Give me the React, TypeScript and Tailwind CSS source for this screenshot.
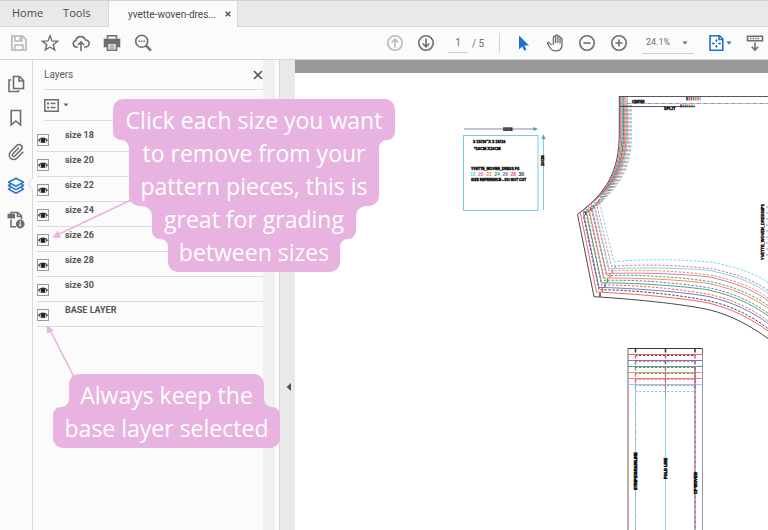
import React, { useState } from "react";

const sizes = [
  { name: "30", color: "#333333" },
  { name: "28", color: "#f0525c" },
  { name: "26", color: "#6a68b4" },
  { name: "24", color: "#2fa35f" },
  { name: "22", color: "#f28150" },
  { name: "20", color: "#da6c9f" },
  { name: "18", color: "#74cfe3" },
];

const layers = [
  "size 18",
  "size 20",
  "size 22",
  "size 24",
  "size 26",
  "size 28",
  "size 30",
  "BASE LAYER",
];

const Icon = ({ children }: { children: React.ReactNode }) => (
  <svg
    width="18"
    height="18"
    viewBox="0 0 18 18"
    fill="none"
    stroke="currentColor"
    strokeWidth="1.6"
    className="shrink-0"
    aria-hidden="true"
  >
    {children}
  </svg>
);

const IconButton = ({
  label,
  children,
  className = "text-[#6e6e6e]",
}: {
  label: string;
  children: React.ReactNode;
  className?: string;
}) => (
  <button aria-label={label} className={"flex shrink-0 items-center " + className}>
    {children}
  </button>
);

const Caret = ({ className = "" }: { className?: string }) => (
  <svg width="6" height="4" viewBox="0 0 6 4" className={className} aria-hidden="true">
    <path d="M0.4 0.4h5.2L3 3.6z" fill="currentColor" />
  </svg>
);

const TabBar = () => (
  <div className="flex h-[27px] border-t border-[#d2d2d2] bg-[#e9e9e9] text-[11px] text-[#4a4a4a]">
    <nav className="flex w-[109px] items-center gap-5 border-r border-b border-[#d8d8d8] pl-3 font-['Open_Sans',sans-serif]">
      <a href="#home">Home</a>
      <a href="#tools">Tools</a>
    </nav>
    <div className="flex w-32 items-center justify-between bg-[#fbfbfb] pr-1.5 pl-[19px] text-[10px]">
      <span>yvette-woven-dres...</span>
      <button aria-label="Close tab">
        <svg width="6" height="6" viewBox="0 0 6 6" stroke="#555" strokeWidth="1.5">
          <path d="M0.7 0.7l4.6 4.6M5.3 0.7L0.7 5.3" />
        </svg>
      </button>
    </div>
    <div className="flex-1 border-b border-l border-[#d8d8d8]" />
  </div>
);

const Toolbar = () => (
  <div className="flex h-[33px] items-center justify-between border-b border-[#d5d5d5] bg-[#fbfbfb] pr-1 pl-2.5 text-[10px] text-[#6e6e6e]">
    <div className="flex gap-[13px]">
      <IconButton label="Save" className="text-[#b5b5b5]">
        <Icon>
          <path d="M1.8 2h10.7L16 5.5V16H1.8z" />
          <path d="M5 2v5h7V2M5 16v-5h8v5M10 3v3" strokeWidth="1.4" />
        </Icon>
      </IconButton>
      <IconButton label="Star">
        <Icon>
          <path d="M9 1.8l2 5.1 5.5.3-4.3 3.5 1.5 5.3L9 13l-4.7 3 1.5-5.3-4.3-3.5L7 6.9z" strokeWidth="1.4" />
        </Icon>
      </IconButton>
      <IconButton label="Upload">
        <Icon>
          <path d="M6 13H4.500a3.300 3.300 0 0 1-.7-6.500A5 5 0 0 1 13.400 6a3.500 3.500 0 0 1 .4 7H12M9 17V8.500M6 11l3-3 3 3" />
        </Icon>
      </IconButton>
      <IconButton label="Print">
        <Icon>
          <path d="M4.5 5V1.7h9V5" />
          <path d="M1.500 5.500h15v7h-15z" fill="currentColor" />
          <path d="M4.5 9.5h9v6.8h-9z" fill="#fbfbfb" />
          <path d="M6.500 12h5M6.500 14h5" strokeWidth="1" />
        </Icon>
      </IconButton>
      <IconButton label="Search">
        <Icon>
          <circle cx="7.700" cy="7.300" r="6" />
          <path d="M12 11.6l5 5" strokeWidth="2.2" />
          <path d="M4.400 7.300h6.600" strokeDasharray="1.5 1" />
        </Icon>
      </IconButton>
    </div>

    <div className="flex items-center gap-3.5">
      <div className="flex items-center gap-[13px]">
        <IconButton label="Previous page" className="text-[#b9b9b9]">
          <Icon>
            <circle cx="9" cy="9" r="7.200" />
            <path d="M9 13.5v-8M5.700 8.500L9 5.200l3.300 3.300" />
          </Icon>
        </IconButton>
        <IconButton label="Next page">
          <Icon>
            <circle cx="9" cy="9" r="7.200" />
            <path d="M9 4.500v8M5.700 9.500L9 12.800l3.300-3.300" />
          </Icon>
        </IconButton>
        <label className="flex items-center gap-1">
          <input
            aria-label="Page number"
            defaultValue="1"
            className="h-5 w-5 border-b border-[#d0d0d0] bg-transparent text-center"
          />
          <span className="w-3.5 whitespace-nowrap">/ 5</span>
        </label>
        <div className="h-5 w-px bg-[#d5d5d5]" />
      </div>
      <IconButton label="Select" className="text-[#1f72cc]">
        <Icon>
          <path d="M5 1.500v14l3.200-3 2 4.200 2.200-1-2-4.100H15z" fill="currentColor" stroke="none" />
        </Icon>
      </IconButton>
      <IconButton label="Pan">
        <Icon>
          <path
            strokeWidth="1.300"
            strokeLinejoin="round"
            d="M5.500 11L3 8.600c-1-.8-2 .2-1.400 1.100l3 4.800c1 1.600 2.400 2.400 4.700 2.400 4 0 6.700-2 6.700-6V5c0-1.500-2-1.500-2 0v4V3.200c0-1.500-2.200-1.500-2.200 0V8.500 2.200c0-1.600-2.200-1.600-2.200 0v6.300V3.200c0-1.500-2.200-1.500-2.200 0V11"
          />
        </Icon>
      </IconButton>
      <IconButton label="Zoom out">
        <Icon>
          <circle cx="9" cy="9" r="7.200" />
          <path d="M5.500 9h7" />
        </Icon>
      </IconButton>
      <IconButton label="Zoom in">
        <Icon>
          <circle cx="9" cy="9" r="7.200" />
          <path d="M5.500 9h7M9 5.500v7" />
        </Icon>
      </IconButton>
      <div className="grid items-center border-b border-[#d0d0d0]">
        <select
          aria-label="Zoom level"
          className="col-start-1 row-start-1 h-5 w-[52px] appearance-none bg-transparent pl-1 text-[9px]"
        >
          <option>24.1%</option>
          <option>50%</option>
          <option>100%</option>
        </select>
        <Caret className="pointer-events-none col-start-1 row-start-1 mr-1.5 justify-self-end" />
      </div>
      <IconButton label="Fit page" className="w-6 text-[#1f72cc]">
        <Icon>
          <path d="M2 1.700h9.500L14.800 5v11.300H2z" />
          <path d="M11 1.700v3.800h3.800" />
          <path d="M8.400 6v2M8.400 11v2M4.500 9.500h2.300M10 9.500h2.300" strokeWidth="1.2" />
          <path
            d="M7 6.800L8.400 5l1.400 1.800zM7 12.200l1.400 1.800 1.400-1.800zM5.300 8L3.700 9.500 5.300 11zM11.500 8l1.600 1.500-1.600 1.500z"
            fill="currentColor"
            stroke="none"
          />
        </Icon>
        <Caret />
      </IconButton>
      <IconButton label="Scrolling">
        <Icon>
          <path d="M1.500 2.200h15v4.600h-15z" />
          <path d="M4 4.500h10" strokeDasharray="1.500 1" />
          <path d="M9 8.500V16M5.800 12.800L9 16l3.200-3.200" />
        </Icon>
      </IconButton>
    </div>
  </div>
);

const Rail = () => (
  <nav
    aria-label="Panels"
    className="flex w-8 shrink-0 flex-col items-center gap-4 bg-[#fbfbfb] pt-[15px]"
  >
    <IconButton label="Pages">
      <Icon>
        <path d="M6.500 1.500h6l4 4v8h-10z" />
        <path d="M12 1.500V6h4.500M4.300 5H2v11.500h9.500v-1.200" />
      </Icon>
    </IconButton>
    <IconButton label="Bookmarks">
      <Icon>
        <path d="M4.200 1.500h9.300V16L8.850 12 4.200 16z" />
      </Icon>
    </IconButton>
    <IconButton label="Attachments">
      <Icon>
        <path
          transform="scale(0.75)"
          strokeWidth="2"
          d="m16 6-8.414 8.586a2 2 0 0 0 2.829 2.829l8.414-8.586a4 4 0 1 0-5.657-5.657l-8.379 8.551a6 6 0 1 0 8.485 8.485l8.379-8.551"
        />
      </Icon>
    </IconButton>
    <IconButton label="Layers" className="text-[#2a79cf]">
      <Icon>
        <path strokeLinejoin="round" d="M9 1.200l7.500 4L9 9.200l-7.500-4z" />
        <path
          strokeLinejoin="round"
          d="M3.600 7.200L1.500 8.500 9 12.600l7.500-4.100-2.100-1.300M3.600 10.800l-2.100 1.300L9 16.300l7.500-4.200-2.100-1.300"
        />
      </Icon>
    </IconButton>
    <IconButton label="Document info">
      <Icon>
        <path d="M4 3V1.500h6.800l3.700 3.700V8M4 8.500v7.200h5" />
        <path d="M10.500 1.500v4h4" />
        <path d="M.5 2.800h7.500v4.600H.5z" fill="currentColor" stroke="none" />
        <circle cx="13.200" cy="13" r="4.400" fill="currentColor" stroke="none" />
        <path d="M13.200 12.300v3.200M13.200 10.200v1.200" stroke="#fbfbfb" strokeWidth="1.4" />
      </Icon>
    </IconButton>
  </nav>
);

const LayerRow = ({ name }: { name: string }) => {
  const [visible, setVisible] = useState(true);

  return (
    <li className="flex h-[25px] items-start border-b border-[#dcdcdc]">
      <button
        aria-label={"Toggle " + name}
        aria-pressed={visible}
        onClick={() => setVisible(!visible)}
        className="mt-[7px] flex h-3 w-3 items-center justify-center border border-[#999]"
      >
        {visible && (
          <svg width="10" height="8" viewBox="0 0 10 8" aria-hidden="true">
            <path d="M0.6 5C2 1.200 8 1.200 9.400 5" fill="none" stroke="#444" strokeWidth="1.4" />
            <path d="M1 5.500C3 7 7 7 9 5.500" fill="none" stroke="#777" />
            <circle cx="5" cy="4.400" r="2.300" fill="#222" />
          </svg>
        )}
      </button>
      <span className="ml-4 pt-0.5 text-[9px] leading-3 font-bold text-[#555]">{name}</span>
    </li>
  );
};

const LayersPanel = () => (
  <section className="relative flex w-[247px] shrink-0 border-l border-[#d9d9d9] bg-[#fbfbfb]">
    <svg
      width="6"
      height="12"
      viewBox="0 0 6 12"
      className="absolute top-[118px] -left-1.5"
      aria-hidden="true"
    >
      <path d="M6 0L1 6l5 6" fill="#fbfbfb" stroke="#d9d9d9" />
    </svg>
    <div className="flex-1 pl-1">
      <header className="ml-[7px] flex h-[30px] items-center justify-between border-b border-[#dcdcdc] text-[10px] text-[#5c5c5c]">
        <h2>Layers</h2>
        <button aria-label="Close panel">
          <svg width="10" height="10" viewBox="0 0 10 10" stroke="#555" strokeWidth="1.6">
            <path d="M1 1l8 8M9 1L1 9" />
          </svg>
        </button>
      </header>
      <div className="ml-[7px] flex h-[31px] items-center border-b border-[#dcdcdc]">
        <button aria-label="Layer options" className="flex items-center gap-1 text-[#6e6e6e]">
          <svg width="15" height="13" viewBox="0 0 15 13" fill="none" stroke="currentColor">
            <path d="M0.800 0.800h13.400v11.400H0.800z" strokeWidth="1.5" />
            <path d="M3 4.500h2M3 8.500h2" strokeWidth="2" />
            <path d="M6.500 4.500h5M6.500 8.500h5" strokeWidth="1.4" />
          </svg>
          <Caret />
        </button>
      </div>
      <ul className="pt-1.5">
        {layers.map((name) => (
          <LayerRow key={name} name={name} />
        ))}
      </ul>
    </div>
    <div className="mr-1 w-3 bg-[#f0f0f0]" />
  </section>
);

// the 10cm test square printed next to the pieces
const TestSquare = () => (
  <g fontSize="4" fontWeight="900" fill="#111" stroke="#111" strokeWidth="0.4">
    <rect x="463.5" y="135.5" width="74.5" height="75" fill="none" stroke="#74cfe3" strokeWidth="1" />
    <path d="M464 129h72" stroke="#8d84a8" strokeWidth="1" />
    <path d="M533.500 127l4.500 2-4.500 2z" fill="#4d9cb8" stroke="none" />
    <path d="M543.500 210v-73" stroke="#74cfe3" strokeWidth="1" />
    <path d="M541.500 139l2-4.500 2 4.500z" fill="#4d9cb8" stroke="none" />
    <rect x="503" y="127" width="9.5" height="4" fill="#777" stroke="none" />
    <text x="503" y="130.500" fontSize="3.5" strokeWidth="0">
      10CM
    </text>
    <text transform="translate(543.5 166) rotate(-90)">10CM</text>
    <text x="473" y="142.500">
      3 15/16"X 3 15/16
    </text>
    <text x="474" y="150">
      *10CM X10CM
    </text>
    <text x="471" y="169.500" fontSize="3.5">
      YVETTE_WOVEN_DRESS FS
    </text>
    <text x="471" y="181" fontSize="3.5">
      SIZE REFERENCE - DO NOT CUT
    </text>
    {[...sizes].reverse().map((s, i) => (
      <text key={s.name} x={470 + i * 8.1} y="175.500" fontSize="5" fill={s.color} stroke="none">
        {s.name}
      </text>
    ))}
  </g>
);

const Bodice = () => (
  <g fill="none" strokeWidth="0.9">
    {sizes.map(({ name, color }, i) => {
      const topX = 619.3 + i * 1.35;
      const tipX = 577.5 + i * 2.7;
      const tipY = 214.3 - i * 2.1;
      const lowX = 594 + i * 2.5;
      const lowY = 296.7 - i * 4.65;
      const midY = 310 - i * 6.6;
      const endY = 340 - i * 7.6;
      return (
        <g key={name} stroke={color}>
          <path
            d={`M${topX} 96V132C${topX} 172 ${607 + i} ${192 - i} ${tipX} ${tipY}L${lowX} ${lowY}C${lowX + 35} ${lowY + 2 - i * 0.6} 685 ${midY - 6 + i * 0.6} 710 ${midY}C730 ${midY + 5} 750 ${endY - 15} 770 ${endY}`}
          />
          <path
            strokeDasharray="2.5 1.5"
            d={`M${topX + 4} 105V136C${topX + 4} 172 ${608 + i * 1.6} ${192 - i} ${tipX + 6} ${tipY + 2}L${lowX + 5} ${lowY - 7}C${lowX + 40} ${lowY - 7 - i * 0.6} 689 ${midY - 14 + i * 0.6} 714 ${midY - 8}C733 ${midY - 3} 752 ${endY - 24} 770 ${endY - 10}`}
          />
          <path d={`M${lowX + 6} ${lowY - 4}v4M${tipX + 7} ${tipY - 3}l2 3`} strokeWidth="1.4" />
          <path
            d={`M${687 + i * 2.2} 96.500v4M${681 + i * 2.2} 104.500v3`}
            strokeWidth="1.6"
          />
        </g>
      );
    })}
    <path d="M619 96.500H768M620 106.500H695" stroke="#444" />
    <path d="M620 103.500H768" stroke="#74cfe3" />
    <path d="M620 103.500H768" stroke="#da6c9f" strokeDasharray="3 4" />
    <path d="M767 206V256" stroke="#da6c9f" strokeDasharray="2 4" />
    <g fill="#111" stroke="#111" strokeWidth="0.4" fontWeight="900">
      <text x="632" y="103" fontSize="3">
        CENTER
      </text>
      <text x="664" y="109.500" fontSize="4">
        SPLIT
      </text>
      <text transform="translate(764 260) rotate(-90)" fontSize="4">
        YVETTE_WOVEN_DRESS#P1
      </text>
    </g>
  </g>
);

const Placket = () => (
  <g fill="none" strokeWidth="0.9">
    <path d="M628 530V348.500H702.500V530" stroke="#555" />
    <path d="M628.500 384V530" stroke="#c9a3a3" />
    <path d="M702.500 354V530" stroke="#9a96b8" />
    {sizes.map(({ name, color }, i) => {
      const y = 348.5 + i * 6;
      return (
        <g key={name} stroke={color}>
          <path d={`M628 ${y}H702.500`} />
          <path d={`M635 ${y + 7}H695`} strokeDasharray="2.5 1.5" />
          <path d={`M635.500 ${y}v4M665.500 ${y}v4M695 ${y}v4`} strokeWidth="1.5" />
        </g>
      );
    })}
    <path d="M635.500 384V530M665.500 384V530" stroke="#74cfe3" />
    <path d="M635.500 354V530" stroke="#d98aa0" strokeDasharray="2 5" />
    <path d="M665.500 366V396" stroke="#da6c9f" />
    <path d="M695 366V530" stroke="#8a6cb0" strokeWidth="1.2" />
    <path d="M695 366V530" stroke="#f0525c" strokeWidth="1.2" strokeDasharray="2 3" />
    <g fill="#111" stroke="#111" strokeWidth="0.6" fontSize="4" fontWeight="900">
      <text transform="translate(637 490) rotate(-90)">STRIPE/GRAINLINE</text>
      <text transform="translate(667 479) rotate(-90)">FOLD LINE</text>
      <text transform="translate(696.5 494) rotate(-90)">CF WOVEN</text>
    </g>
  </g>
);

const DocumentView = () => (
  <main className="min-w-0 flex-1 overflow-hidden border-t-[13px] border-[#999] bg-white">
    <svg
      viewBox="295 73 473 457"
      className="block w-full font-['Liberation_Sans',sans-serif]"
      role="img"
      aria-label="Sewing pattern pieces"
    >
      <TestSquare />
      <Bodice />
      <Placket />
    </svg>
  </main>
);

const Callout = ({
  lines,
  outline,
  width,
  className,
}: {
  lines: string[];
  outline: string;
  width: number;
  className: string;
}) => {
  const height = lines.length * 33 + 8;
  return (
    <div className={"absolute grid text-center text-white " + className}>
      <svg
        width={width}
        height={height}
        viewBox={`0 0 ${width} ${height}`}
        className="col-start-1 row-start-1"
        aria-hidden="true"
      >
        <path d={outline} fill="#e8b3e0" />
      </svg>
      <p className="col-start-1 row-start-1 pt-[5px] font-['Open_Sans',sans-serif] text-[23px] leading-[33px] whitespace-nowrap">
        {lines.map((line) => (
          <span key={line} className="block">
            {line}
          </span>
        ))}
      </p>
    </div>
  );
};

const Arrows = () => (
  <svg
    width="140"
    height="390"
    viewBox="0 0 140 390"
    className="pointer-events-none absolute top-0 left-0"
    aria-hidden="true"
  >
    <g stroke="#e8b3e0" strokeWidth="1.6" fill="#e8b3e0">
      <path d="M131 200L57 235M74 377L50 330" />
      <path d="M54 237l3.500-5 2.500 5z" />
      <path d="M47.500 327l.3 5.500 4.500-2.500z" />
    </g>
  </svg>
);

const App = () => (
  <div className="relative flex min-h-screen flex-col overflow-hidden bg-[#fbfbfb] font-[Roboto,sans-serif]">
    <TabBar />
    <Toolbar />
    <div className="flex flex-1">
      <Rail />
      <LayersPanel />
      <div className="flex w-4 shrink-0 flex-col border-l border-[#d5d5d5] bg-[#e9e9e9] pt-[323px] pl-1.5">
        <button aria-label="Collapse panel">
          <svg width="5" height="8" viewBox="0 0 5 8">
            <path d="M5 0v8L0.5 4z" fill="#555" />
          </svg>
        </button>
      </div>
      <DocumentView />
    </div>
    <Arrows />
    <Callout
      className="top-[99px] left-[113px]"
      width={282}
      lines={[
        "Click each size you want",
        "to remove from your",
        "pattern pieces, this is",
        "great for grading",
        "between sizes",
      ]}
      outline="M10 0H272a10 10 0 0 1 10 10V33a8 8 0 0 1-8 8a8 8 0 0 0-8 8V97a10 10 0 0 1-10 10H253a10 10 0 0 0-10 10V132a8 8 0 0 1-8 8a8 8 0 0 0-8 8V163a10 10 0 0 1-10 10H65a10 10 0 0 1-10-10V148a8 8 0 0 0-8-8a8 8 0 0 1-8-8V117a10 10 0 0 0-10-10H26a10 10 0 0 1-10-10V49a8 8 0 0 0-8-8a8 8 0 0 1-8-8V10A10 10 0 0 1 10 0z"
    />
    <Callout
      className="top-[374px] left-[53px]"
      width={227}
      lines={["Always keep the", "base layer selected"]}
      outline="M26 0H201a10 10 0 0 1 10 10V25a8 8 0 0 0 8 8a8 8 0 0 1 8 8V64a10 10 0 0 1-10 10H10a10 10 0 0 1-10-10V41a8 8 0 0 1 8-8a8 8 0 0 0 8-8V10a10 10 0 0 1 10-10z"
    />
  </div>
);

export default App;
